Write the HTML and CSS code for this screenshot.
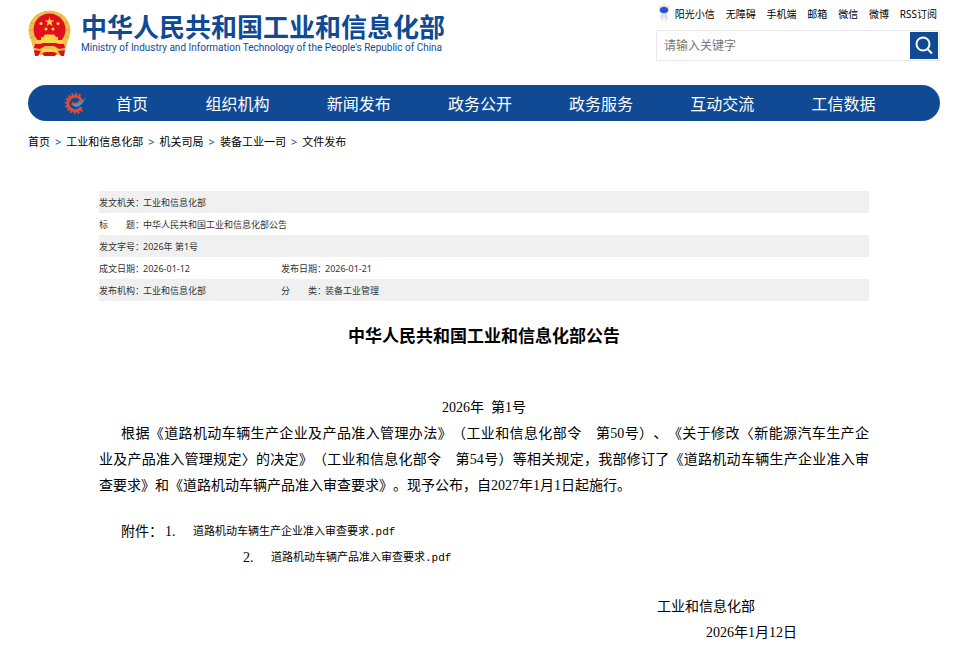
FILE: index.html
```html
<!DOCTYPE html>
<html lang="zh-CN">
<head>
    <meta charset="UTF-8">
    <meta name="viewport" content="width=device-width, initial-scale=1.0">
    <title>中华人民共和国工业和信息化部公告</title>
    <link rel="stylesheet" href="styles.css">
</head>
<body>
    <header class="header">
        <a class="brand" href="#">
            <svg class="emblem" viewBox="0 0 43 46" aria-hidden="true">
                <ellipse cx="21.500" cy="20.500" rx="21" ry="20" fill="#efc050"/>
                <path d="M3 29 C4 37 7 40 7 45 H36 C36 40 39 37 40 29 Z" fill="#efc050"/>
                <path d="M3 12 L6 14 M1 20 H5 M2 28 L6 26 M40 12 L37 14 M42 20 H38 M41 28 L37 26 M9 5 L11 8 M34 5 L32 8 M17 1 L18 4 M26 1 L25 4" stroke="#dca03a" stroke-width="1"/>
                <circle cx="21.500" cy="19.500" r="16" fill="#df101b"/>
                <path d="M21.500 7 L22.700 10.500 H26.300 L23.400 12.600 L24.500 16 L21.500 13.900 L18.500 16 L19.600 12.600 L16.700 10.500 H20.300 Z" fill="#fbd648"/>
                <g fill="#fbd648">
                    <circle cx="13" cy="13.500" r="1.500"/>
                    <circle cx="30" cy="13.500" r="1.500"/>
                    <circle cx="18" cy="19" r="1.500"/>
                    <circle cx="25" cy="19" r="1.500"/>
                </g>
                <path d="M15 27 L17 24.500 H26 L28 27 Z M13 27 H30 V30 H35 V33 H8 V30 H13 Z" fill="#fbd648"/>
                <path d="M7 34 H36 L37 38 L31 39 L26 36 H17 L12 39 L6 38 Z" fill="#df101b"/>
                <path d="M6 40 L13 41 L10 46 H7 Z M37 40 L30 41 L33 46 H36 Z" fill="#d8131c"/>
                <path d="M15 39 H28 L30 42 L26 43 H17 L13 42 Z" fill="#fbd648"/>
                <path d="M14 43 L18 42 H25 L29 43 L27 46 H16 Z" fill="#d8131c"/>
            </svg>
            <span class="brand-text">
                <strong>中华人民共和国工业和信息化部</strong>
                <span lang="en">Ministry of Industry and Information Technology of the People's Republic of China</span>
            </span>
        </a>

        <div class="tools">
            <div class="top-links">
                <svg class="mascot" viewBox="0 0 12 18" aria-hidden="true">
                    <path d="M1 2 L3 4 M6 0 V3 M11 2 L9 4" stroke="#f6c962" stroke-width="1"/>
                    <path d="M3 8 H9 L10 15 L8 16 L6 13 L4 16 L2 14 Z" fill="#d3e2f8"/>
                    <path d="M4 16 L5 17 M8 16 L7 17" stroke="#f6c962"/>
                    <ellipse cx="6" cy="6" rx="5" ry="4" fill="#b9cdf2"/>
                    <ellipse cx="6" cy="6" rx="4" ry="3" fill="#2d50c8"/>
                </svg>
                <a href="#">阳光小信</a>
                <a href="#">无障碍</a>
                <a href="#">手机端</a>
                <a href="#">邮箱</a>
                <a href="#">微信</a>
                <a href="#">微博</a>
                <a href="#">RSS订阅</a>
            </div>
            <form class="search">
                <input type="text" placeholder="请输入关键字" aria-label="请输入关键字">
                <button type="submit" aria-label="搜索">
                    <svg viewBox="0 0 28 27" aria-hidden="true">
                        <circle cx="13" cy="12" r="6.500"/>
                        <path d="M17.500 17 L22 21.500"/>
                    </svg>
                </button>
            </form>
        </div>
    </header>

    <nav class="nav">
        <svg class="nav-logo" viewBox="0 0 24 24" aria-hidden="true">
            <path d="M18.500 18 A9 9 0 1 1 17 4.500" fill="none" stroke="#e6492d" stroke-width="4" stroke-dasharray="2 1.500"/>
            <path d="M18 16 A7.500 7.500 0 1 1 18 8 C17 12 12 13 8 12" fill="none" stroke="#e6492d" stroke-width="3"/>
            <path d="M9 13 C11 18 19 16 23 5 C20 10 15 13 9 13 Z" fill="#3b9ddb"/>
            <path d="M10 11 C12 7 16 7 15 9 C14 11 12 11 10 11" fill="#114a94"/>
        </svg>
        <ul>
            <li><a href="#">首页</a></li>
            <li><a href="#">组织机构</a></li>
            <li><a href="#">新闻发布</a></li>
            <li><a href="#">政务公开</a></li>
            <li><a href="#">政务服务</a></li>
            <li><a href="#">互动交流</a></li>
            <li><a href="#">工信数据</a></li>
        </ul>
    </nav>

    <div class="breadcrumb">
        <a href="#">首页</a><span>&gt;</span><a href="#">工业和信息化部</a><span>&gt;</span><a href="#">机关司局</a><span>&gt;</span><a href="#">装备工业一司</a><span>&gt;</span><a href="#">文件发布</a>
    </div>

    <main class="article">
        <table class="info">
            <colgroup>
                <col class="col-label">
                <col class="col-value">
                <col class="col-label">
                <col>
            </colgroup>
            <tr>
                <th scope="row">发文机关：</th>
                <td colspan="3">工业和信息化部</td>
            </tr>
            <tr>
                <th scope="row">标　　题：</th>
                <td colspan="3">中华人民共和国工业和信息化部公告</td>
            </tr>
            <tr>
                <th scope="row">发文字号：</th>
                <td colspan="3">2026年 第1号</td>
            </tr>
            <tr>
                <th scope="row">成文日期：</th>
                <td>2026-01-12</td>
                <th scope="row">发布日期：</th>
                <td>2026-01-21</td>
            </tr>
            <tr>
                <th scope="row">发布机构：</th>
                <td>工业和信息化部</td>
                <th scope="row">分　　类：</th>
                <td>装备工业管理</td>
            </tr>
        </table>

        <h1>中华人民共和国工业和信息化部公告</h1>

        <div class="content">
            <p class="number">2026年&nbsp; 第1号</p>
            <p class="text">根据《道路机动车辆生产企业及产品准入管理办法》（工业和信息化部令　第50号）、《关于修改〈新能源汽车生产企业&NoBreak;及产品准入管理规定〉的决定》（工业和信息化部令　第54号）等相关规定，我部修订了《道路机动车辆生产企业准入审查&NoBreak;要求》和《道路机动车辆产品准入审查要求》。现予公布，自2027年1月1日起施行。</p>

            <!-- 附件 -->
            <div class="attachments">
                <p><span class="label">附件：</span><span class="no">1.</span><a href="#">道路机动车辆生产企业准入审查要求.pdf</a></p>
                <p class="second"><span class="no">2.</span><a href="#">道路机动车辆产品准入审查要求.pdf</a></p>
            </div>

            <!-- 落款 -->
            <div class="sign">
                <p class="dept">工业和信息化部</p>
                <p class="date">2026年1月12日</p>
            </div>
        </div>
    </main>
</body>
</html>
```

FILE: styles.css
```css
/* General styles */
* {
    box-sizing: border-box;
}

body {
    margin: 0;
    padding: 0 20px 0 28px;
    background-color: #fff;
    color: #000;
    font-family: "Noto Sans", "Noto Sans CJK SC", sans-serif;
    font-size: 12px;
    text-spacing-trim: space-all;
}

a {
    color: inherit;
    text-decoration: none;
}

p {
    margin: 0;
}

/* Header */
.header {
    display: flex;
    justify-content: space-between;
    height: 85px;
}

.brand {
    display: flex;
    align-items: flex-start;
    gap: 10px;
    padding-top: 10px;
    color: #114a94;
    white-space: nowrap;
}

.emblem {
    width: 43px;
    height: 46px;
}

.brand-text strong {
    display: block;
    font-family: "Noto Sans CJK SC", sans-serif;
    font-size: 26px;
    line-height: 32px;
}

.brand-text span {
    display: block;
    font-family: Roboto, sans-serif;
    font-size: 10px;
    line-height: 12px;
}

.tools {
    width: 284px;
}

.top-links {
    display: flex;
    justify-content: space-between;
    align-items: center;
    height: 26px;
    padding: 0 3px 0 2px;
    font-size: 10px;
    white-space: nowrap;
}

.mascot {
    width: 12px;
    height: 18px;
    margin-right: -6px;
}

.search {
    display: flex;
    height: 31px;
    margin-top: 4px;
    padding: 1px 1px 1px 0;
    border: 1px solid #e8e8e8;
}

.search input {
    flex: 1;
    min-width: 0;
    padding: 0 7px;
    border: 0;
    outline: 0;
    font: inherit;
}

.search input::placeholder {
    color: #777;
}

.search button {
    width: 28px;
    padding: 0;
    border: 0;
    background-color: #114a94;
}

.search button svg {
    display: block;
    width: 28px;
    height: 27px;
    fill: none;
    stroke: #fff;
    stroke-width: 2;
}

/* Navigation */
.nav {
    display: flex;
    align-items: center;
    height: 36px;
    padding: 0 36px;
    border-radius: 18px;
    background-color: #114a94;
    color: #fff;
}

.nav-logo {
    flex: none;
    width: 23px;
    height: 23px;
}

.nav ul {
    display: flex;
    flex: 1;
    margin: 0;
    padding: 0;
    list-style: none;
}

.nav li {
    flex: 1;
    font-size: 16px;
    text-align: center;
}

.nav li:first-child {
    flex: 0 0 90px;
}

.breadcrumb {
    padding-top: 12px;
    font-size: 11px;
    line-height: 18px;
}

.breadcrumb span {
    margin: 0 5px;
    color: #114a94;
}

/* Document info */
.article {
    margin: 40px 71px 0;
}

.info {
    width: 100%;
    table-layout: fixed;
    border-collapse: collapse;
    font-size: 9px;
    color: #333;
}

.info .col-label {
    width: 44px;
}

.info .col-value {
    width: 138px;
}

.info th,
.info td {
    height: 22px;
    padding: 0;
    font-weight: normal;
    text-align: left;
    white-space: nowrap;
}

.info tr:nth-child(odd) {
    background-color: #f0f0f0;
}

.article h1 {
    margin: 22px 0 0;
    font-size: 17px;
    line-height: 26px;
    text-align: center;
}

/* Document body */
.content {
    margin-top: 46px;
    font-family: "Liberation Serif", "Noto Sans CJK SC", serif;
    font-size: 14px;
    line-height: 26px;
}

.number {
    text-align: center;
}

.text {
    text-align: justify;
    text-indent: 22px;
}

.attachments {
    margin-top: 20px;
    padding-left: 22px;
}

.attachments p {
    display: flex;
}

.attachments .second {
    padding-left: 122px;
}

.attachments .label {
    width: 44px;
}

.attachments .no {
    width: 28px;
}

.attachments a {
    font-family: "Liberation Mono", "Noto Sans CJK SC", monospace;
    font-size: 11px;
}

.sign {
    margin-top: 23px;
    text-align: right;
}

.sign .dept {
    padding-right: 114px;
}

.sign .date {
    padding-right: 72px;
}
```
